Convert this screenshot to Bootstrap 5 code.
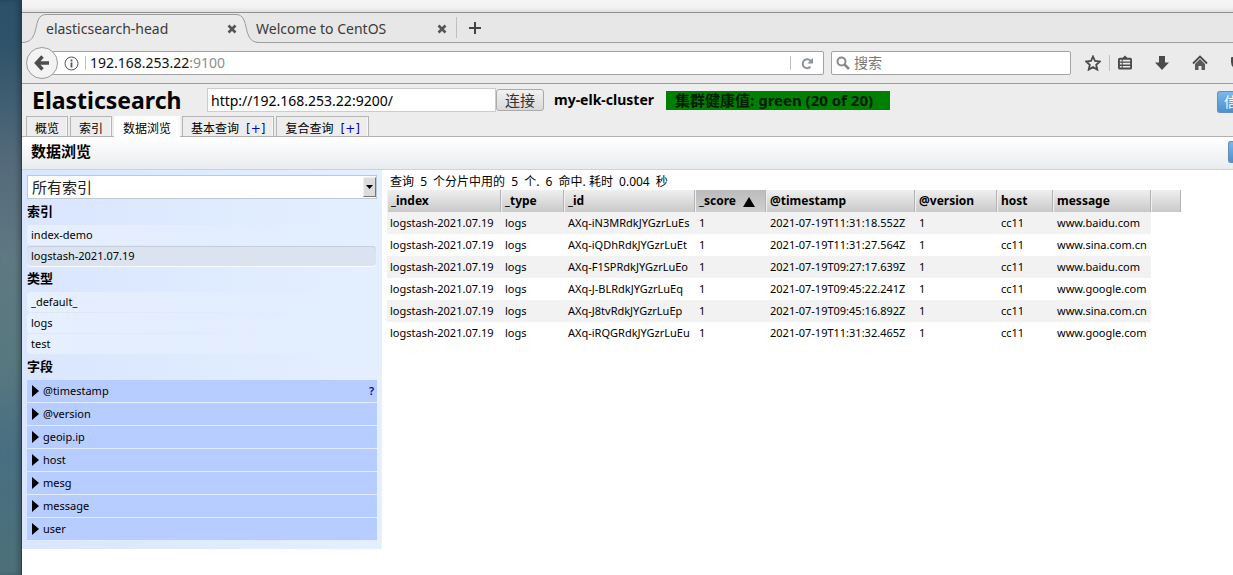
<!DOCTYPE html>
<html lang="zh-CN">
<head>
<meta charset="utf-8">
<meta name="viewport" content="width=device-width, initial-scale=1">
<title>elasticsearch-head</title>
<link href="https://cdn.jsdelivr.net/npm/bootstrap@5.3.0/dist/css/bootstrap.min.css" rel="stylesheet">
<style>
:root { --ui: "Noto Sans", "Noto Sans CJK SC", sans-serif; }
body { font-family: var(--ui); font-size: 11px; line-height: 16px; color: #000; background: #fff; overflow-x: hidden; }
.desktop { width: 22px; background: linear-gradient(#2b5068, #2f5369 8%, #546a7b 28%, #5f7881 45%, #58797f 62%, #486f82 78%, #4c7079); border-right: 1px solid #2c3d48; box-shadow: inset -3px 0 4px #0003; }
.titlebar { height: 13px; background: linear-gradient(#f5f5f5, #f2f2f2 60%, #e0e0e0); border-bottom: 1px solid #8f8f8f; }
.tabstrip { height: 30px; background: #e7e7e7; border-bottom: 1px solid #a0a0a0; font-size: 14px; line-height: 20px; }
.tab-item { height: 30px; padding-top: 2px; color: #3a3a3a; text-decoration: none; }
.tab-shape { left: 0; top: 0; }
.tab-item span, .tab-item .tab-close { position: relative; }
.tab-first { width: 234px; padding-left: 24px; padding-right: 19px; }
.tab-second { width: 200px; padding-right: 9px; }
.plain { border: 0; background: none; padding: 0; line-height: 1; display: inline-flex; }
.toolbar { height: 41px; background: #ebebeb; border-bottom: 1px solid #9c9c9f; padding-left: 4px; }
.back { width: 32px; height: 32px; border: 1px solid #9b9b9b; border-radius: 50%; background: #f3f3f3; z-index: 1; justify-content: center; align-items: center; }
.field { height: 24px; background: #fff; border: 1px solid #a3a3a3; border-radius: 2px; }
.field input { border: 0; outline: 0; padding: 0; min-width: 0; background: none; font-size: 14px; line-height: 20px; }
.address { width: 772px; margin-left: -6px; padding-left: 12px; border-left: 0; }
.address .host-name { font-size: 14px; color: #111; white-space: nowrap; }
.address .port { color: #8d8d8d; }
.address .info { margin-right: 6px; }
.address .reload { padding: 0 9px 0 10px; }
.search { width: 240px; margin-left: 7px; }
.search input::placeholder { color: #777; opacity: 1; }
.tools { margin-left: 14px; }
.tools .tool { margin-left: 23px; }
.vline { width: 1px; background: #c0c0c0; }
.app-head { background: #ededed; border-bottom: 1px solid #b0b0b0; height: 53px; }
.app-row { padding: 3px 0 0 10px; }
.app-title { font: 700 23px/24px var(--ui); width: 175px; margin: 0; }
.conn-input { width: 289px; height: 24px; border: 1px solid #ccc; border-radius: 0; padding: 0 3px; font-size: 14px; line-height: 22px; background: #fff; }
.conn-btn { width: 48px; height: 22px; border: 1px solid #aaa; border-radius: 3px; background: linear-gradient(#f2f2f2, #d9d9d9); font-size: 15px; line-height: 18px; padding: 0; color: #333; }
.cluster { font-size: 14px; font-weight: 700; white-space: nowrap; margin: 0 12px 0 10px; }
.health { background: #008000; width: 224px; height: 19px; font-size: 15px; font-weight: 700; line-height: 19px; padding-left: 9px; color: #001a00; white-space: nowrap; }
.blue-btn { height: 22px; flex: none; border: 1px solid #668db8; border-right: 0; border-radius: 3px 0 0 3px; background: linear-gradient(#7db8ea, #4a91cd); color: #fff; font-size: 14px; line-height: 20px; padding: 0 0 0 6px; white-space: nowrap; overflow: hidden; text-align: left; }
.info-btn { width: 16px; }
.refresh-btn { width: 5px; }
.app-tabs { gap: 2px; height: 20px; }
.app-tab { border: 1px solid #b5b5b5; border-bottom: 0; height: 20px; line-height: 24px; font-size: 12px; padding: 0 8px; color: #000; background: #ededed; box-shadow: inset -1px 0 #f8f8f8; white-space: nowrap; text-decoration: none; }
.app-tab.active { background: #fff; border-color: #fff; height: 21px; }
.app-tab span { font-family: "DejaVu Sans", sans-serif; color: #0000c8; margin-left: 7px; }
.page-bar { height: 33px; background: linear-gradient(#fff, #e9ecef); border-bottom: 1px solid #cdd2d8; padding-left: 9px; }
.page-bar h2 { font-size: 15px; line-height: 20px; font-weight: 700; margin: 4px 0 0; }
.side { width: 360px; flex: none; padding: 5px 5px 8px; background: linear-gradient(90deg, #d9e6fe, #e4efff); }
.index-select { width: 350px; height: 24px; border: 1px solid #c0c8d4; background: #fff; }
.index-select select { appearance: none; border: 0; background: none; font-size: 15px; line-height: 20px; padding: 0 4px; color: #222; outline: 0; }
.drop { width: 13px; margin: 1px 0; background: #dcdcdc; border: 1px solid; border-color: #eee #777 #777 #eee; pointer-events: none; }
.side h3 { font-size: 13px; line-height: 18px; font-weight: 700; margin: 0 0 5px; }
.index-select + h3 { margin-top: 3px; }
.side ul { margin: 0; padding: 0 0 2px; list-style: none; }
.pick { height: 20px; line-height: 20px; margin: 1px 0; padding: 0 4px; border-radius: 4px; background: linear-gradient(90deg, #e7f0ff, #e4eefe00); display: block; color: #000; text-decoration: none; width: 349px; }
.pick.on { background: #dae3ef; box-shadow: inset 0 1px #c5cedc, 0 1px #f8fbff; }
.fld { height: 22px; margin-bottom: 1px; background: #b7cdff; box-shadow: 0 1px #e2ecff; padding: 0 3px 0 5px; width: 350px; }
.fld a { color: #0000c8; text-decoration: none; font-weight: 600; }
.result { padding: 4px 0 0 5px; }
.result p { font-size: 12px; line-height: 16px; margin: 0; padding-left: 3px; }
.result p span { margin: 0 3px; }
.grid-data { table-layout: fixed; width: 794px; border-collapse: separate; border-spacing: 0; }
.grid-data th { height: 22px; padding: 0 4px; font-size: 12px; font-weight: 700; background: linear-gradient(#efefef, #c9c9c9); border-right: 1px solid #b3b3b3; box-shadow: inset 1px 0 #f0f0f0; white-space: nowrap; }
.grid-data th.sorted { background: linear-gradient(#bbb, #cfcfcf); }
.grid-data td { height: 22px; padding: 0 4px; white-space: nowrap; }
.grid-data td:first-child { padding-left: 3px; }
.grid-data tbody tr:nth-child(odd) td:not(:last-child) { background: #f2f2f2; }
</style>
<script src="https://cdn.jsdelivr.net/npm/bootstrap@5.3.0/dist/js/bootstrap.bundle.min.js"></script>
</head>
<body>
<div class="d-flex min-vh-100 overflow-hidden">
  <div class="desktop flex-shrink-0"></div>
  <div class="flex-grow-1 overflow-hidden">
    <div class="titlebar"></div>
    <nav class="tabstrip d-flex" aria-label="Browser tabs">
      <a href="#" class="tab-item tab-first position-relative d-flex align-items-center justify-content-between flex-shrink-0">
        <svg class="tab-shape position-absolute" width="240" height="30"><path d="M0 29.500C20 29.500 9 1.500 24 1.500H214C229 1.500 219 29.500 237 29.500V30H0z" fill="#ebebeb"/><path d="M0 29.500C20 29.500 9 1.500 24 1.500H214C229 1.500 219 29.500 237 29.500" fill="none" stroke="#9b9b9b"/></svg>
        <span>elasticsearch-head</span>
        <svg class="tab-close" width="10" height="10" viewBox="0 0 10 10"><path d="M1.500 1.500l7 7m0-7l-7 7" stroke="#555" stroke-width="2.600"/></svg>
      </a>
      <a href="#" class="tab-item tab-second d-flex align-items-center justify-content-between flex-shrink-0">
        <span>Welcome to CentOS</span>
        <svg class="tab-close" width="10" height="10" viewBox="0 0 10 10"><path d="M1.500 1.500l7 7m0-7l-7 7" stroke="#555" stroke-width="2.600"/></svg>
      </a>
      <div class="vline my-1"></div>
      <button class="plain align-items-center ms-2 ps-1" aria-label="New tab"><svg width="12" height="12"><path d="M6 0v12M0 6h12" stroke="#444" stroke-width="2"/></svg></button>
    </nav>
    <div class="toolbar d-flex align-items-center overflow-hidden">
      <button class="plain back flex-shrink-0" aria-label="Back"><svg width="16" height="16" viewBox="0 0 16 16"><path d="M8.500 1.500L2.500 8l6 6.500M2.500 8H15" fill="none" stroke="#4d4d4d" stroke-width="3.400"/></svg></button>
      <div class="field address d-flex align-items-center flex-shrink-0">
        <svg class="info" width="15" height="15" viewBox="0 0 15 15"><circle cx="7.500" cy="7.500" r="6.500" fill="none" stroke="#555"/><path d="M7.500 6.500v5M7.500 3.500v2" stroke="#555" stroke-width="1.800"/></svg>
        <div class="vline align-self-stretch my-1 me-1"></div>
        <span class="host-name flex-grow-1">192.168.253.22<span class="port">:9100</span></span>
        <div class="vline align-self-stretch my-1"></div>
        <button class="plain reload" aria-label="Reload"><svg width="13" height="13" viewBox="0 0 13 13"><path d="M9.500 9.800A4.500 4.500 0 1 1 9.800 4" fill="none" stroke="#8b949c" stroke-width="2"/><path d="M12 .8v5.700H6.300z" fill="#8b949c"/></svg></button>
      </div>
      <label class="field search d-flex align-items-center flex-shrink-0 ps-1">
        <svg class="me-1" width="14" height="14" viewBox="0 0 14 14"><circle cx="5.500" cy="5.500" r="4" fill="none" stroke="#8a8a8a" stroke-width="2"/><path d="M8.500 8.500L13 13" stroke="#8a8a8a" stroke-width="2.600"/></svg>
        <input type="text" class="w-75" placeholder="搜索" aria-label="搜索">
      </label>
      <div class="tools d-flex align-items-center flex-shrink-0">
        <button class="plain" aria-label="Bookmark"><svg width="16" height="16" viewBox="0 0 16 16"><path d="M8 1.500l2 4.500 4.900.5-3.700 3.300 1.100 4.800L8 12.100l-4.300 2.500 1.100-4.800L1.100 6.500 6 6z" fill="none" stroke="#4a4a4a" stroke-width="1.800"/></svg></button>
        <div class="vline align-self-stretch mx-2"></div>
        <button class="plain" aria-label="Bookmark list"><svg width="14" height="16" viewBox="0 0 15 16"><path d="M5 2.500L7.500 0 10 2.500h3a2 2 0 0 1 2 2V13a2 2 0 0 1-2 2H2a2 2 0 0 1-2-2V4.500a2 2 0 0 1 2-2z" fill="#4a4a4a"/><path d="M2 5.500h2M5 5.500h8M2 8.700h2M5 8.700h8M2 12h2M5 12h8" stroke="#ebebeb" stroke-width="1.800"/></svg></button>
        <button class="plain tool" aria-label="Downloads"><svg width="14" height="16" viewBox="0 0 14 16"><path d="M4 1h6v6.500h4L7 15 0 7.500h4z" fill="#4a4a4a"/></svg></button>
        <button class="plain tool" aria-label="Home"><svg width="16" height="16" viewBox="0 0 16 16"><path d="M8 4l5 5v6H9.500v-4h-3v4H3V9z" fill="#5a5a5a"/><path d="M1 8.500l7-7 7 7" fill="none" stroke="#4a4a4a" stroke-width="1.800"/></svg></button>
        <button class="plain tool" aria-label="Pocket"><svg width="16" height="16" viewBox="0 0 16 16"><path d="M0 3q0-1 1-1h14q1 0 1 1v4a8 8 0 0 1-16 0z" fill="#4a4a4a"/></svg></button>
      </div>
    </div>
    <header class="app-head d-flex flex-column justify-content-between">
      <div class="app-row d-flex align-items-center">
        <h1 class="app-title">Elasticsearch</h1>
        <input class="conn-input" type="text" value="http://192.168.253.22:9200/" aria-label="URL">
        <button class="conn-btn">连接</button>
        <span class="cluster">my-elk-cluster</span>
        <span class="health">集群健康值: green (20 of 20)</span>
        <button class="blue-btn info-btn ms-auto mt-1" aria-label="信息">信</button>
      </div>
      <nav class="app-tabs d-flex ms-1">
        <a href="#" class="app-tab">概览</a>
        <a href="#" class="app-tab">索引</a>
        <a href="#" class="app-tab active">数据浏览</a>
        <a href="#" class="app-tab">基本查询<span>[+]</span></a>
        <a href="#" class="app-tab">复合查询<span>[+]</span></a>
      </nav>
    </header>
    <div class="page-bar d-flex justify-content-between">
      <h2>数据浏览</h2>
      <button class="blue-btn refresh-btn mt-1 px-0" aria-label="刷新"></button>
    </div>
    <main class="d-flex align-items-start">
      <aside class="side">
        <div class="index-select d-flex">
          <select class="flex-grow-1" aria-label="索引"><option>所有索引</option></select>
          <span class="drop d-flex align-items-center justify-content-center"><svg width="7" height="4"><path d="M0 0h7L3.500 4z"/></svg></span>
        </div>
        <h3>索引</h3>
        <ul><li><a href="#" class="pick">index-demo</a></li><li><a href="#" class="pick on">logstash-2021.07.19</a></li></ul>
        <h3>类型</h3>
        <ul><li><a href="#" class="pick">_default_</a></li><li><a href="#" class="pick">logs</a></li><li><a href="#" class="pick">test</a></li></ul>
        <h3>字段</h3>
        <div id="fields"></div>
      </aside>
      <section class="result">
        <p>查询 <span>5</span> 个分片中用的 <span>5</span> 个. <span>6</span> 命中. 耗时 <span>0.004</span> 秒</p>
        <table class="grid-data">
          <colgroup><col style="width:114px"><col style="width:63px"><col style="width:131px"><col style="width:71px"><col style="width:149px"><col style="width:82px"><col style="width:56px"><col style="width:98px"><col></colgroup>
          <thead><tr><th>_index</th><th>_type</th><th>_id</th><th class="sorted">_score <svg class="ms-1" width="12" height="10"><path d="M6 0l6 10H0z"/></svg></th><th>@timestamp</th><th>@version</th><th>host</th><th>message</th><th></th></tr></thead>
          <tbody id="rows"></tbody>
        </table>
      </section>
    </main>
  </div>
</div>
<script>
const hits = [
  ["AXq-iN3MRdkJYGzrLuEs", "2021-07-19T11:31:18.552Z", "www.baidu.com"],
  ["AXq-iQDhRdkJYGzrLuEt", "2021-07-19T11:31:27.564Z", "www.sina.com.cn"],
  ["AXq-F1SPRdkJYGzrLuEo", "2021-07-19T09:27:17.639Z", "www.baidu.com"],
  ["AXq-J-BLRdkJYGzrLuEq", "2021-07-19T09:45:22.241Z", "www.google.com"],
  ["AXq-J8tvRdkJYGzrLuEp", "2021-07-19T09:45:16.892Z", "www.sina.com.cn"],
  ["AXq-iRQGRdkJYGzrLuEu", "2021-07-19T11:31:32.465Z", "www.google.com"]
];
document.getElementById("rows").innerHTML = hits.map(([id, ts, msg]) =>
  "<tr>" + ["logstash-2021.07.19", "logs", id, "1", ts, "1", "cc11", msg, ""].map(v => `<td>${v}</td>`).join("") + "</tr>").join("");
document.getElementById("fields").innerHTML = ["@timestamp", "@version", "geoip.ip", "host", "mesg", "message", "user"].map((f, i) =>
  `<div class="fld d-flex align-items-center"><svg class="me-1" width="7" height="12"><path d="M0 0l7 6-7 6z"/></svg><span class="flex-grow-1">${f}</span>${i ? "" : '<a href="#">?</a>'}</div>`).join("");
</script>
</body>
</html>
